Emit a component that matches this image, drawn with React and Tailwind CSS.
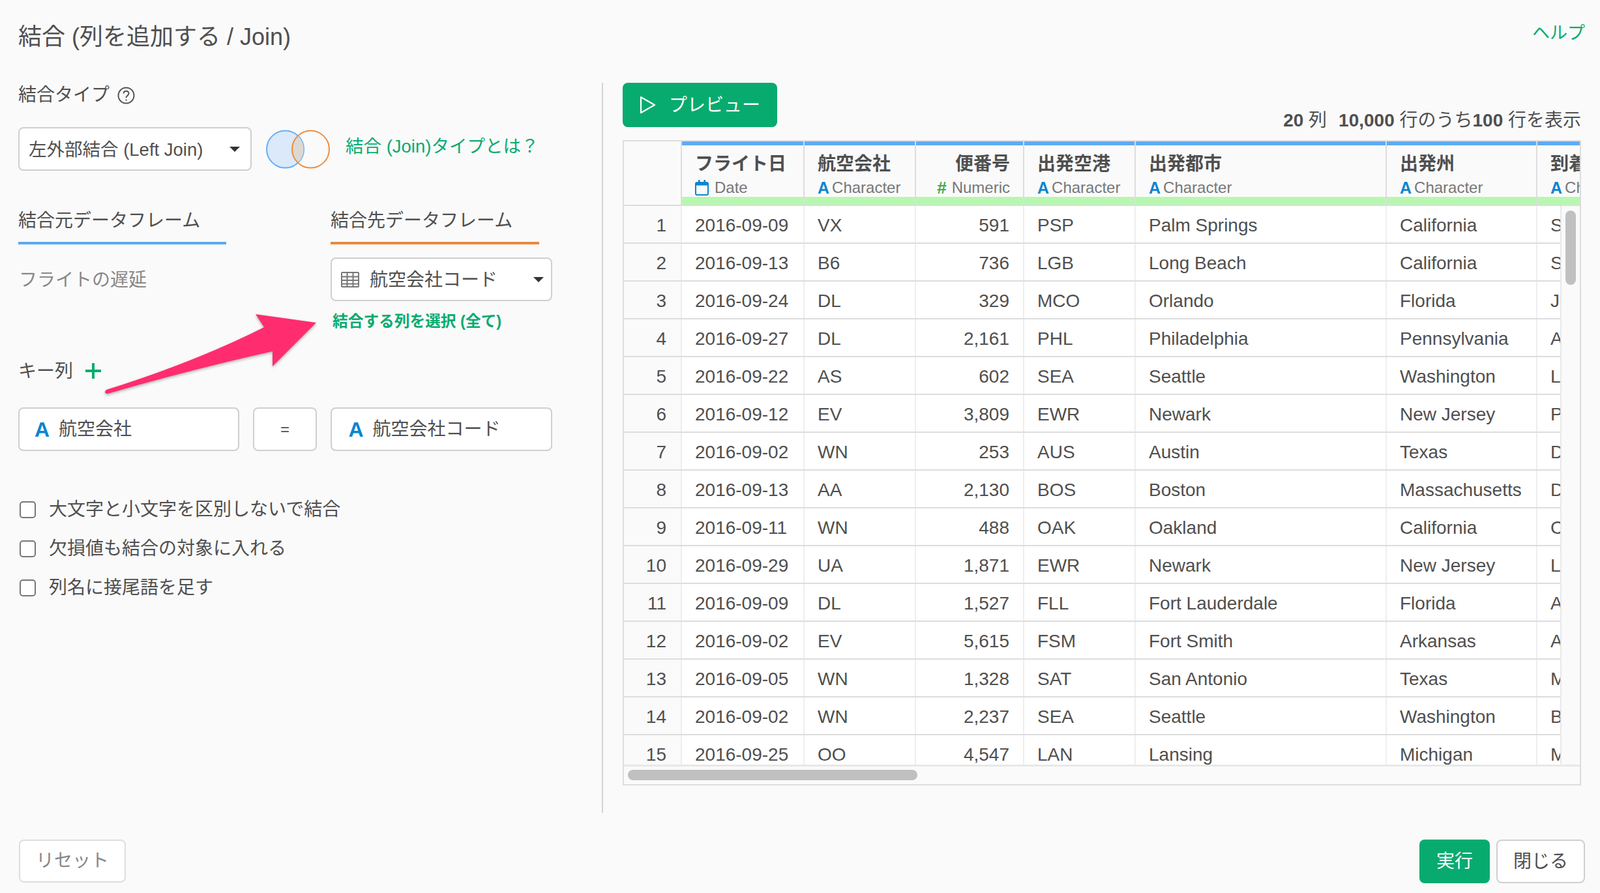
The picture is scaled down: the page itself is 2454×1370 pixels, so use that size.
import React from "react";

const columns = [
  { name: "フライト日", type: "Date", width: "w-[188px]" },
  { name: "航空会社", type: "Character", width: "w-[171px]" },
  { name: "便番号", type: "Numeric", width: "w-[166px]", right: true },
  { name: "出発空港", type: "Character", width: "w-[171px]" },
  { name: "出発都市", type: "Character", width: "w-[385px]" },
  { name: "出発州", type: "Character", width: "w-[231px]" },
  { name: "到着都市", type: "Character", width: "w-[240px]" },
];

const rows = [
  ["2016-09-09", "VX", "591", "PSP", "Palm Springs", "California", "Seattle"],
  ["2016-09-13", "B6", "736", "LGB", "Long Beach", "California", "Seattle"],
  ["2016-09-24", "DL", "329", "MCO", "Orlando", "Florida", "Jackson"],
  ["2016-09-27", "DL", "2,161", "PHL", "Philadelphia", "Pennsylvania", "Atlanta"],
  ["2016-09-22", "AS", "602", "SEA", "Seattle", "Washington", "Los Angeles"],
  ["2016-09-12", "EV", "3,809", "EWR", "Newark", "New Jersey", "Pittsburgh"],
  ["2016-09-02", "WN", "253", "AUS", "Austin", "Texas", "Dallas"],
  ["2016-09-13", "AA", "2,130", "BOS", "Boston", "Massachusetts", "Dallas"],
  ["2016-09-11", "WN", "488", "OAK", "Oakland", "California", "Chicago"],
  ["2016-09-29", "UA", "1,871", "EWR", "Newark", "New Jersey", "Los Angeles"],
  ["2016-09-09", "DL", "1,527", "FLL", "Fort Lauderdale", "Florida", "Atlanta"],
  ["2016-09-02", "EV", "5,615", "FSM", "Fort Smith", "Arkansas", "Atlanta"],
  ["2016-09-05", "WN", "1,328", "SAT", "San Antonio", "Texas", "Minneapolis"],
  ["2016-09-02", "WN", "2,237", "SEA", "Seattle", "Washington", "Boston"],
  ["2016-09-25", "OO", "4,547", "LAN", "Lansing", "Michigan", "Minneapolis"],
];

const options = [
  "大文字と小文字を区別しないで結合",
  "欠損値も結合の対象に入れる",
  "列名に接尾語を足す",
];

function Caret() {
  return <span className="w-0 h-0 border-x-[8px] border-x-transparent border-t-[8px] border-t-[#333]" />;
}

function CharIcon({ className }) {
  return (
    <span className={`[font-family:'DejaVu_Serif',serif] font-bold text-[#0b85d0] leading-none ${className}`}>A</span>
  );
}

function TypeIcon({ type }) {
  if (type === "Date") {
    return (
      <svg width="21" height="24" viewBox="0 0 21 24" fill="none" className="mr-[9px]">
        <rect x="1" y="4" width="19" height="19" rx="2" stroke="#0b85d0" strokeWidth="2" />
        <rect x="1" y="4" width="19" height="4.5" fill="#0b85d0" />
        <rect x="5" y="0" width="2.6" height="6" fill="#0b85d0" />
        <rect x="13.4" y="0" width="2.6" height="6" fill="#0b85d0" />
      </svg>
    );
  }
  if (type === "Numeric") {
    return <span className="mr-[8px] [font-family:'DejaVu_Sans',sans-serif] font-bold text-[#3faa4b] text-[26px] leading-none">#</span>;
  }
  return <CharIcon className="mr-[4px] text-[25px]" />;
}

function DataTable() {
  return (
    <div className="relative w-[1470px] h-[990px] border-2 border-[#ddd] flex flex-col overflow-hidden">
      {/* header */}
      <div className="flex h-[99px] shrink-0 border-b-[2px] border-[#ddd]">
        <div className="w-[89px] shrink-0 border-r-2 border-[#ddd]" />
        {columns.map((col) => (
          <div key={col.name} className={`${col.width} shrink-0 flex flex-col border-r-2 border-[#ddd]`}>
            <div className="h-[6px] bg-[#5eaaf5]" />
            <div className={`flex-1 flex flex-col px-[20px] ${col.right ? "items-end pr-[20px]" : ""}`}>
              <div className="mt-[11px] h-[36px] leading-[36px] text-[28px] font-bold whitespace-nowrap">{col.name}</div>
              <div className="mt-[4px] flex items-center h-[28px] text-[24px] text-[#777] whitespace-nowrap">
                <TypeIcon type={col.type} />
                {col.type}
              </div>
            </div>
            <div className="h-[12px] bg-[#b7f7b0]" />
          </div>
        ))}
      </div>

      {/* body */}
      <div className="flex h-[857px] shrink-0">
        <div className="w-[1436px] shrink-0 overflow-hidden bg-white">
          {rows.map((row, i) => (
            <div key={i} className="flex h-[58px] border-b-2 border-[#ddd] text-[28px] leading-[60px]">
              <div className="w-[89px] shrink-0 text-right pr-[22px] bg-[#fafafa] border-r-2 border-[#eee]">{i + 1}</div>
              {row.map((cell, j) => (
                <div
                  key={j}
                  className={`${columns[j].width} shrink-0 px-[20px] whitespace-nowrap overflow-hidden border-r-2 border-[#eee] ${columns[j].right ? "text-right pr-[21px]" : ""}`}
                >
                  {cell}
                </div>
              ))}
            </div>
          ))}
        </div>
        <div className="flex-1 pl-[6px] pt-[7px] border-l-2 border-[#e8e8e8]">
          <div className="w-[16px] h-[114px] rounded-full bg-[#c0c0c0]" />
        </div>
      </div>

      {/* horizontal scroll gutter */}
      <div className="flex-1 border-t-[3px] border-[#e8e8e8] pt-[5px] pl-[6px]">
        <div className="w-[444px] h-[16px] rounded-full bg-[#c0c0c0]" />
      </div>
    </div>
  );
}

function JoinArrow() {
  return (
    <svg
      className="absolute left-[150px] top-[470px] drop-shadow-[0_2px_2px_rgba(0,0,0,0.3)]"
      width="345"
      height="145"
      viewBox="150 470 345 145"
    >
      <path
        d="M485 495 L392 482 L405 502 Q300 555 163 598 Q158 603 165 604 Q300 565 418 539 L418 562 Z"
        fill="#ff2d6f"
      />
    </svg>
  );
}

export default function App() {
  return (
    <div
      className="relative w-[2454px] h-[1370px] bg-[#fafafa] text-[#4f4f4f] overflow-hidden flex flex-col"
      style={{ fontFamily: '"Liberation Sans", "Noto Sans CJK JP", sans-serif' }}
    >
      {/* title */}
      <div className="h-[114px] shrink-0 flex justify-between pl-[28px] pr-[23px]">
        <h1 className="mt-[33px] h-[48px] leading-[48px] text-[36px]">結合 (列を追加する / Join)</h1>
        <a className="mt-[33px] h-[36px] leading-[36px] text-[27px] text-[#08ab6f]">ヘルプ</a>
      </div>

      <div className="h-[1136px] shrink-0 flex pl-[28px]">
        {/* left panel */}
        <div className="w-[819px] shrink-0">
          <div className="mt-[12px] h-[40px] flex items-center gap-[12px] text-[28px]">
            結合タイプ
            <svg width="27" height="27" viewBox="0 0 27 27" fill="none" stroke="#555" strokeWidth="2">
              <circle cx="13.5" cy="13.5" r="12" />
              <path d="M9.5 10.5c0-5 8-5 8 0 0 3-4 3-4 6.5M13.5 19.5v2" />
            </svg>
          </div>

          <div className="mt-[29px] h-[67px] flex items-center">
            <div className="w-[358px] h-[67px] bg-white border-2 border-[#cfcfcf] rounded-[8px] flex items-center justify-between pl-[14px] pr-[16px] text-[27.5px] whitespace-nowrap">
              <span className="pt-[2px]">左外部結合 (Left Join)</span>
              <Caret />
            </div>
            <svg className="ml-[21px]" width="100" height="62" viewBox="0 0 100 62" fill="none">
              <circle cx="30.5" cy="31" r="28.5" fill="#dbe9fb" stroke="#64aef5" strokeWidth="2" />
              <path d="M50 10.5a28.5 28.5 0 0 1 0 41a28.5 28.5 0 0 1 0-41z" fill="#dcd9d3" />
              <circle cx="69.5" cy="31" r="28.5" stroke="#ef8c3c" strokeWidth="2" />
            </svg>
            <a className="ml-[23px] mb-[8px] text-[27.5px] text-[#08ab6f] whitespace-nowrap">結合 (Join)タイプとは？</a>
          </div>

          <div className="mt-[56px] flex gap-[160px]">
            <div className="w-[319px] h-[57px] border-b-[4px] border-[#5aa9f4] text-[28px] leading-[42px]">結合元データフレーム</div>
            <div className="w-[320px] h-[57px] border-b-[4px] border-[#e88a3d] text-[28px] leading-[42px]">結合先データフレーム</div>
          </div>

          <div className="mt-[20px] flex gap-[160px]">
            <div className="w-[319px] pl-[1px] pt-[2px] h-[67px] flex items-center text-[28px] text-[#888]">フライトの遅延</div>
            <div className="w-[340px]">
              <div className="h-[67px] bg-white border-2 border-[#cfcfcf] rounded-[8px] flex items-center pl-[14px] pr-[11px] text-[28px]">
                <svg width="28" height="24" viewBox="0 0 28 24" fill="none" stroke="#777" strokeWidth="2">
                  <rect x="1" y="1" width="26" height="22" rx="1" />
                  <path d="M1 7.5h26M1 13h26M1 18.5h26M9.5 1v22M18.5 1v22" />
                </svg>
                <span className="ml-[16px] flex-1 pt-[2px]">航空会社コード</span>
                <Caret />
              </div>
              <div className="mt-[16px] pl-[3px] h-[30px] leading-[30px] text-[23.7px] font-bold text-[#08ab6f] whitespace-nowrap">結合する列を選択 (全て)</div>
            </div>
          </div>

          <div className="mt-[41px] h-[40px] flex items-center gap-[19px] text-[28px]">
            <span className="pt-[2px]">キー列</span>
            <svg width="24" height="24" viewBox="0 0 24 24" stroke="#08ab6f" strokeWidth="4">
              <path d="M12 0v24M0 12h24" />
            </svg>
          </div>

          <div className="mt-[36px] flex h-[67px] text-[28px]">
            <div className="w-[339px] bg-white border-2 border-[#cfcfcf] rounded-[8px] flex items-center pl-[23px]">
              <CharIcon className="text-[32px] mr-[14px]" />
              航空会社
            </div>
            <div className="ml-[21px] w-[99px] bg-white border-2 border-[#cfcfcf] rounded-[8px] flex items-center justify-center text-[24px]">=</div>
            <div className="ml-[21px] w-[340px] bg-white border-2 border-[#cfcfcf] rounded-[8px] flex items-center pl-[25px]">
              <CharIcon className="text-[32px] mr-[14px]" />
              航空会社コード
            </div>
          </div>

          <div className="mt-[70px] flex flex-col gap-[20px]">
            {options.map((label) => (
              <label key={label} className="h-[40px] flex items-center text-[28px]">
                <span className="ml-[2px] w-[25px] h-[26px] bg-white border-2 border-[#777] rounded-[5px]" />
                <span className="ml-[20px]">{label}</span>
              </label>
            ))}
          </div>
        </div>

        {/* divider */}
        <div className="ml-[76px] mt-[13px] w-[2px] h-[1120px] bg-[#d4d4d4]" />

        {/* right panel */}
        <div className="ml-[30px] w-[1470px] shrink-0">
          <div className="mt-[13px] h-[88px] flex justify-between">
            <button className="w-[237px] h-[68px] bg-[#08ab6f] rounded-[8px] flex items-center pl-[26px] text-white text-[28px]">
              <svg width="25" height="28" viewBox="0 0 25 28" fill="none" stroke="white" strokeWidth="2.2" strokeLinejoin="round">
                <path d="M2 2l21 12L2 26z" />
              </svg>
              <span className="ml-[20px] pt-[2px]">プレビュー</span>
            </button>
            <div className="mt-[38px] h-[40px] leading-[40px] text-[28px] whitespace-nowrap">
              <b>20</b> 列<b className="ml-[18px]">10,000</b> 行のうち<b>100</b> 行を表示
            </div>
          </div>
          <DataTable />
        </div>
      </div>

      {/* footer buttons */}
      <div className="flex-1 flex justify-between items-start pl-[29px] pr-[23px] pt-[38px] text-[28px]">
        <button className="w-[164px] h-[66px] border-2 border-[#ddd] rounded-[8px] bg-white text-[#888]">リセット</button>
        <div className="flex gap-[10px]">
          <button className="w-[108px] h-[67px] rounded-[8px] bg-[#08ab6f] text-white">実行</button>
          <button className="w-[136px] h-[67px] border-2 border-[#cfcfcf] rounded-[8px] bg-white">閉じる</button>
        </div>
      </div>

      <JoinArrow />
    </div>
  );
}
